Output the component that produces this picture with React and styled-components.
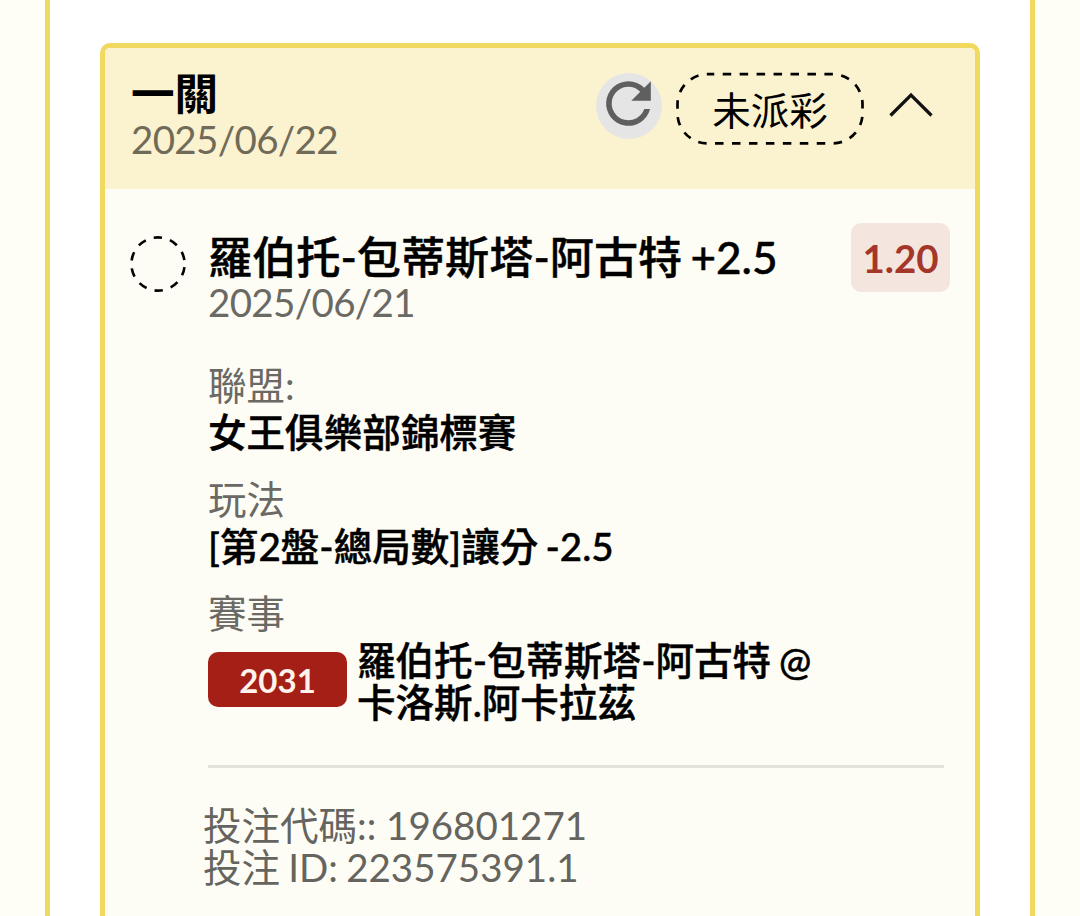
import React, { useState } from "react";
import styled, { createGlobalStyle } from "styled-components";

const GlobalStyle = createGlobalStyle`
  * {
    box-sizing: border-box;
  }

  body {
    margin: 0;
    background-color: #fefdf6;
    font-family: Lato, "Noto Sans CJK TC", sans-serif;
    color: #000;
  }
`;

const Page = styled.div`
  height: 916px;
  padding: 0 45px;
  overflow: hidden;
`;

const Panel = styled.main`
  height: 100%;
  padding: 43px 50px 0;
  background-color: #fff;
  border: solid #f0d95e;
  border-width: 0 5px;
`;

const Card = styled.article`
  height: 940px;
  background-color: #fefdf5;
  border: 5px solid #f0d95e;
  border-radius: 10px;
  overflow: hidden;
`;

const CardHeader = styled.header`
  display: flex;
  align-items: flex-start;
  height: 141px;
  padding: 24px 41px 0 26px;
  background-color: #fbf2d0;
`;

const HeaderText = styled.div`
  flex: 1;
  margin-top: -1px;
`;

const Title = styled.h2`
  margin: 0;
  font-size: 44.15px;
  line-height: 44px;
  font-weight: 500;
  word-spacing: -3px;
  white-space: nowrap;
  -webkit-text-stroke: 0.45px;
`;

const HeaderTitle = styled(Title)`
  font-size: 43.6px;
  font-weight: 700;
  -webkit-text-stroke: 0;
`;

const DateText = styled.div`
  font-size: 38.5px;
  line-height: 46px;
  letter-spacing: -0.65px;
  color: #6a6963;
`;

const HeaderDate = styled(DateText)`
  line-height: 48px;
  color: #706b58;
`;

const RefreshButton = styled.button`
  display: flex;
  width: 66px;
  height: 66px;
  margin: 1px 14px 0 0;
  padding: 0;
  border: none;
  border-radius: 50%;
  background-color: #e5e5e6;
  color: #5f5f60;
  cursor: pointer;

  svg {
    margin: -3px 0 0 -1px;
  }
`;

const StatusPill = styled.div`
  position: relative;
  width: 188px;
  height: 73px;
  font-size: 38.5px;
  line-height: 76px;
  text-align: center;
`;

const PillOutline = styled.svg`
  position: absolute;
  inset: 0;
`;

const ToggleButton = styled.button`
  display: flex;
  width: 46px;
  height: 28px;
  margin: 19px 0 0 24px;
  padding: 0;
  border: none;
  background: none;
  cursor: pointer;

  svg {
    transform: ${(props) => (props.$open ? "none" : "rotate(180deg)")};
  }
`;

const CardBody = styled.div`
  display: flex;
  padding: 34px 25px 0;
`;

const Marker = styled.svg`
  flex: none;
  margin: 13px 22px 0 0;
`;

const Content = styled.div`
  flex: 1;
`;

const SelectionRow = styled.div`
  display: flex;
  justify-content: space-between;
  height: 139px;
`;

const SelectionText = styled.div`
  padding-top: 12px;
`;

const Odds = styled.div`
  width: 99px;
  height: 69px;
  border-radius: 10px;
  background-color: #f4e6df;
  color: #a43729;
  font-size: 38.5px;
  line-height: 70px;
  font-weight: 700;
  text-align: center;
`;

const Field = styled.section`
  height: 114px;
`;

const Label = styled.div`
  font-size: 38.5px;
  line-height: 46px;
  color: #6a6963;
`;

const Value = styled.div`
  font-size: 38.55px;
  line-height: 49px;
  font-weight: 500;
  word-spacing: -2.5px;
  white-space: nowrap;
  -webkit-text-stroke: 0.45px;
`;

const Match = styled.div`
  display: flex;
  align-items: center;
  height: 84px;
  margin-top: 1px;
`;

const MatchCode = styled.span`
  width: 139px;
  height: 55px;
  margin-right: 10px;
  border-radius: 10px;
  background-color: #a41f15;
  color: #fff3ec;
  font-size: 33px;
  line-height: 57px;
  font-weight: 700;
  text-align: center;
`;

const MatchTeams = styled.div`
  padding-top: 3px;
  font-size: 38.55px;
  line-height: 42px;
  font-weight: 500;
  word-spacing: -2px;
  white-space: nowrap;
  -webkit-text-stroke: 0.45px;
`;

const BetInfo = styled.footer`
  margin: 44px 6px 0 0;
  padding-top: 36px;
  border-top: 3px solid #e2e1da;
`;

const InfoLine = styled.div`
  margin-left: -5px;
  font-size: 38.5px;
  line-height: 42px;
  word-spacing: ${(props) => (props.$tight ? "-1.6px" : "normal")};
  color: #65645e;
`;

const fields = [
  { label: "聯盟:", value: "女王俱樂部錦標賽" },
  { label: "玩法", value: "[第2盤-總局數]讓分 -2.5" },
];

export default function App() {
  const [open, setOpen] = useState(true);

  return (
    <Page>
      <GlobalStyle />
      <Panel>
        <Card>
          <CardHeader>
            <HeaderText>
              <HeaderTitle>一關</HeaderTitle>
              <HeaderDate>2025/06/22</HeaderDate>
            </HeaderText>

            <RefreshButton aria-label="refresh">
              <svg width="67" height="67" viewBox="0 0 24 24" fill="currentColor">
                <path d="M17.65 6.35A7.96 7.96 0 0 0 12 4a8 8 0 1 0 7.73 10h-2.08A6 6 0 1 1 12 6c1.66 0 3.14.69 4.22 1.78L13 11h7V4z" />
              </svg>
            </RefreshButton>

            <StatusPill>
              <PillOutline width="188" height="73" fill="none" stroke="#000" strokeWidth="2.7">
                <rect x="1.5" y="2.2" width="185" height="69.2" rx="30" strokeDasharray="8.5 8.45" strokeDashoffset="-15.2" />
              </PillOutline>
              未派彩
            </StatusPill>

            <ToggleButton $open={open} onClick={() => setOpen(!open)} aria-label="toggle">
              <svg width="46" height="28" fill="none" stroke="#111" strokeWidth="3.2">
                <path d="M2.5 24.5 23 4 43.5 24.5" />
              </svg>
            </ToggleButton>
          </CardHeader>

          {open && (
            <CardBody>
              <Marker width="56" height="56" fill="none" stroke="#000" strokeWidth="2.6">
                <circle cx="28" cy="28" r="26.6" strokeDasharray="8.5 8.21" strokeDashoffset="-3.15" />
              </Marker>

              <Content>
                <SelectionRow>
                  <SelectionText>
                    <Title>羅伯托-包蒂斯塔-阿古特 +2.5</Title>
                    <DateText>2025/06/21</DateText>
                  </SelectionText>
                  <Odds>1.20</Odds>
                </SelectionRow>

                {fields.map((field) => (
                  <Field key={field.label}>
                    <Label>{field.label}</Label>
                    <Value>{field.value}</Value>
                  </Field>
                ))}

                <Label>賽事</Label>
                <Match>
                  <MatchCode>2031</MatchCode>
                  <MatchTeams>
                    羅伯托-包蒂斯塔-阿古特 @<br />
                    卡洛斯.阿卡拉茲
                  </MatchTeams>
                </Match>

                <BetInfo>
                  <InfoLine>投注代碼:: 196801271</InfoLine>
                  <InfoLine $tight>投注 ID: 223575391.1</InfoLine>
                </BetInfo>
              </Content>
            </CardBody>
          )}
        </Card>
      </Panel>
    </Page>
  );
}
